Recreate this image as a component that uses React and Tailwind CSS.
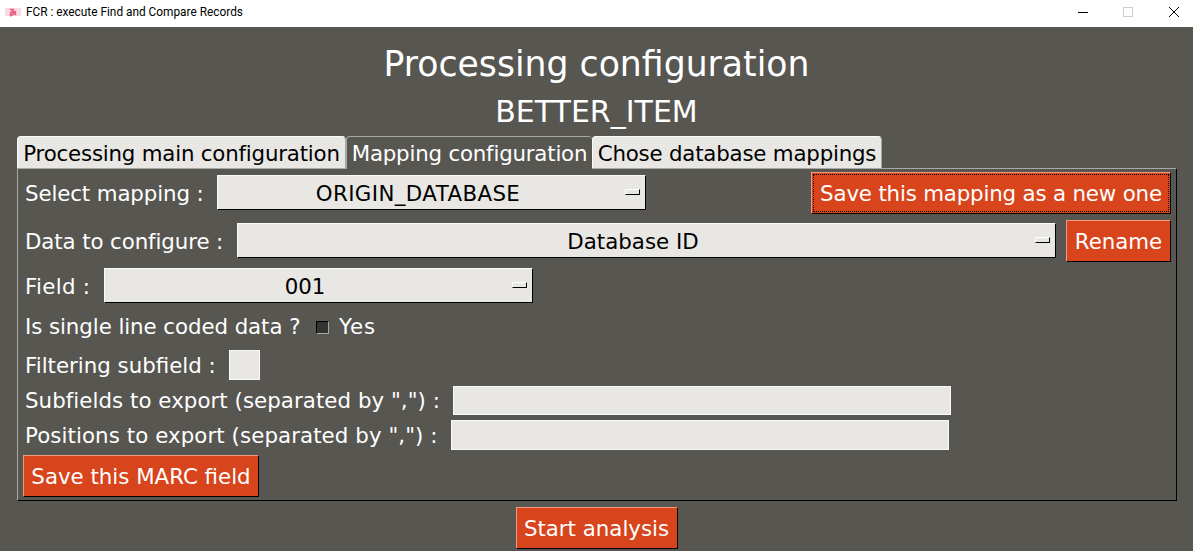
function Dropdown({ value, className, textClass = "" }) {
  return (
    <div className={`relative flex h-[35px] items-center justify-center bg-[#e8e7e3] border-t border-l border-t-[#fafaf8] border-l-[#fafaf8] border-b border-r border-b-black border-r-black text-black pr-[27px] pt-[2px] whitespace-nowrap ${className}`}>
      <span className={textClass}>{value}</span>
      <span className="absolute right-[5px] top-[13px] h-[6px] w-[15px] bg-[#e8e7e3] border-t border-l border-t-white border-l-white border-b border-r border-b-black border-r-black"></span>
    </div>
  );
}

function Btn({ children, className = "" }) {
  return (
    <div className={`flex h-[42px] shrink-0 items-center justify-center whitespace-nowrap bg-[#d8441b] pt-[2px] text-white border-t border-l border-t-[#f09a80] border-l-[#f09a80] border-b border-r border-b-black border-r-black ${className}`}>
      {children}
    </div>
  );
}

function Entry({ className }) {
  return <div className={`bg-[#e8e7e3] border border-[#fafaf8] ${className}`}></div>;
}

export default function App() {
  return (
    <div className="flex h-[551px] w-[1193px] flex-col overflow-hidden bg-[#575651] text-[21.33px] leading-[26px] font-['DejaVu_Sans',sans-serif]">
      <div className="flex h-[27px] shrink-0 items-center bg-white text-black">
        <svg className="ml-[5px] mt-[-3px]" width="16" height="9" viewBox="0 0 16 9">
          <path d="M0 1h16M0 3h16M0 5h16M0 7h16" stroke="#f9b4c4" strokeWidth="1" />
          <path d="M5 1l6 3M5 8l6-3M5 4.5h6M7 1l4 6M9 1L5 7" stroke="#ec5f80" strokeWidth="1.4" />
        </svg>
        <span className="ml-[5px] mt-[-3px] whitespace-nowrap text-[11.85px] leading-[16px] font-['Roboto',sans-serif]">FCR : execute Find and Compare Records</span>
        <div className="ml-auto flex items-center mt-[-3px]">
          <svg width="12" height="12" viewBox="0 0 12 12" className="mr-[33px]"><path d="M1 6.5h10" stroke="#000" strokeWidth="1" /></svg>
          <svg width="12" height="12" viewBox="0 0 12 12" className="mr-[34px]"><rect x="1.5" y="1.5" width="9" height="9" fill="none" stroke="#ccc" /></svg>
          <svg width="12" height="12" viewBox="0 0 12 12" className="mr-[13px]"><path d="M1 1l10 10M11 1L1 11" stroke="#000" strokeWidth="1" /></svg>
        </div>
      </div>

      <div className="flex h-[73px] shrink-0 items-center justify-center text-[34.67px] leading-[42px] text-white">Processing configuration</div>
      <div className="mt-[-3px] flex h-[30px] shrink-0 items-center justify-center text-[30px] leading-[30px] text-white">BETTER_ITEM</div>

      <div className="mt-[9px] ml-[17px] flex h-[32px] shrink-0 items-stretch whitespace-nowrap tracking-[-0.2px]">
        <div className="flex w-[329px] items-center justify-center rounded-t-[4px] bg-[#e8e7e3] pt-[2px] border-t border-l border-r border-t-[#fafaf8] border-l-[#fafaf8] border-r-[#a8a8a4] text-black">Processing main configuration</div>
        <div className="relative z-10 mb-[-1px] flex w-[246px] items-center justify-center rounded-t-[4px] bg-[#575651] pt-[1px] border-t border-l border-t-[#a8a8a4] border-l-[#a8a8a4] text-white">Mapping configuration</div>
        <div className="flex w-[290px] items-center justify-center rounded-t-[4px] bg-[#e8e7e3] pt-[2px] border-t border-l border-r border-t-[#fafaf8] border-l-[#fafaf8] border-r-[#a8a8a4] text-black">Chose database mappings</div>
      </div>

      <div className="ml-[17px] h-[333px] w-[1160px] shrink-0 border-t border-l border-t-[#a8a8a4] border-l-[#a8a8a4] border-b border-r border-b-black border-r-black text-white whitespace-nowrap">
        <div className="flex h-[47px] items-center pl-[7px] pr-[5px]">
          <span className="w-[192px] pt-[2px] tracking-[-0.12px]">Select mapping :</span>
          <Dropdown value="ORIGIN_DATABASE" className="w-[429px]" textClass="tracking-[0.4px]" />
          <Btn className="ml-auto w-[360px] tracking-[-0.17px] outline-1 outline-dotted outline-offset-[-3px] outline-black">Save this mapping as a new one</Btn>
        </div>
        <div className="flex h-[50px] items-center pl-[7px] pr-[5px]">
          <span className="w-[212px] pt-[2px] tracking-[-0.1px]">Data to configure :</span>
          <Dropdown value="Database ID" className="w-[819px] mt-[-1px]" />
          <Btn className="ml-[10px] w-[105px]">Rename</Btn>
        </div>
        <div className="flex h-[40px] items-center pl-[7px]">
          <span className="w-[79px] pt-[2px] tracking-[0.3px]">Field :</span>
          <Dropdown value="001" className="w-[429px] mt-[-1px]" />
        </div>
        <div className="flex h-[42px] items-center pl-[7px]">
          <span className="w-[291px] tracking-[-0.07px]">Is single line coded data ?</span>
          <span className="h-[13px] w-[13px] border-t border-l border-t-black border-l-black border-b border-r border-b-[#a8a8a4] border-r-[#a8a8a4] bg-[#333]"></span>
          <span className="ml-[10px] tracking-[0.9px]">Yes</span>
        </div>
        <div className="flex h-[34px] items-center pl-[7px]">
          <span className="w-[204px] pt-[1px]">Filtering subfield :</span>
          <Entry className="h-[30px] w-[31px]" />
        </div>
        <div className="flex h-[37px] items-center pl-[7px]">
          <span className="w-[428px] tracking-[0.05px]">Subfields to export (separated by ",") :</span>
          <Entry className="h-[29px] w-[498px]" />
        </div>
        <div className="flex h-[32px] items-center pl-[7px]">
          <span className="w-[426px] pt-[2px] tracking-[0.08px]">Positions to export (separated by ",") :</span>
          <Entry className="h-[30px] w-[498px]" />
        </div>
        <div className="pl-[5px] pt-[4px]">
          <Btn className="w-[236px]">Save this MARC field</Btn>
        </div>
      </div>

      <div className="mt-[6px] flex justify-center">
        <Btn className="w-[162px]">Start analysis</Btn>
      </div>
    </div>
  );
}
